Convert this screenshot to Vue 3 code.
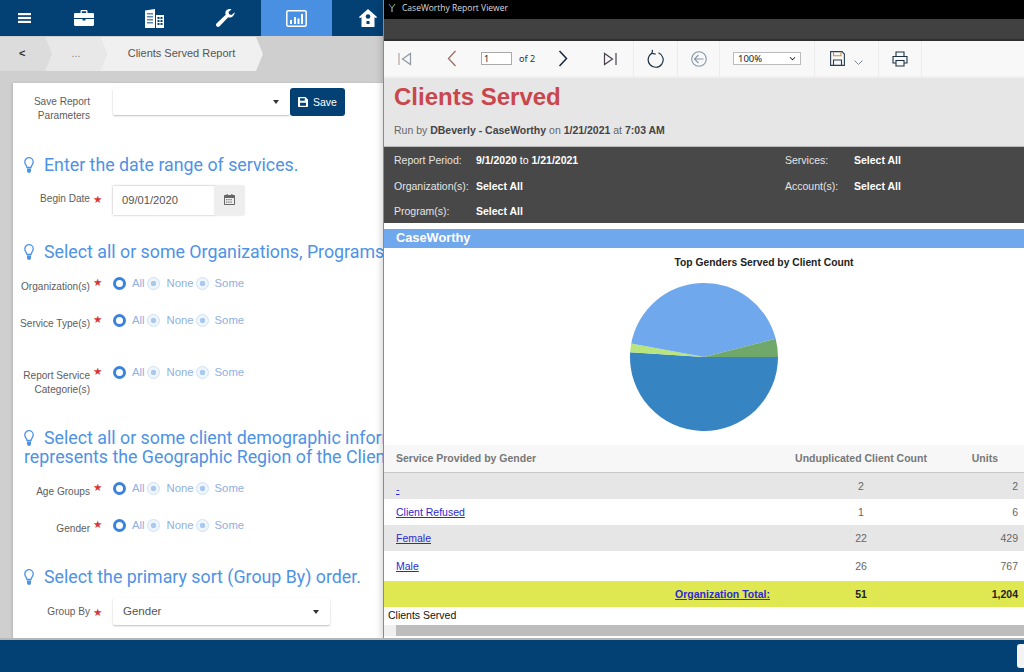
<template>
  <div class="app">
    <div class="main">
      <!-- left side: the parameter form -->
      <div class="left">
        <nav class="nav">
          <div class="nav-item burger">
            <svg width="13" height="10" viewBox="0 0 13 10" fill="#fff">
              <rect width="13" height="2.2" /><rect y="3.9" width="13" height="2.2" /><rect y="7.8" width="13" height="2.2" />
            </svg>
          </div>
          <div class="nav-item">
            <svg width="20" height="16" viewBox="0 0 20 16" fill="#fff">
              <path d="M6.5 3V1.2C6.5.5 7 0 7.7 0h4.6c.7 0 1.2.5 1.2 1.2V3h-1.3V1.3H7.8V3zM0 4.2C0 3.5.5 3 1.2 3h17.6c.7 0 1.2.5 1.2 1.2V8H0zM0 9h8.5v1.6h3V9H20v5.8c0 .7-.5 1.2-1.2 1.2H1.2C.5 16 0 15.5 0 14.8z" />
            </svg>
          </div>
          <div class="nav-item">
            <svg width="19" height="19" viewBox="0 0 19 19">
              <path fill="#fff" d="M0 1.5 10 0v19H0z" />
              <path fill="#fff" d="M11 6h8v13h-8z" />
              <g fill="#5c87ab">
                <rect x="2" y="4" width="6" height="1.5" /><rect x="2" y="7" width="6" height="1.5" /><rect x="2" y="10" width="6" height="1.5" /><rect x="2" y="13" width="6" height="1.5" />
              </g>
              <g fill="#034073">
                <rect x="12.5" y="8" width="2" height="2" /><rect x="15.5" y="8" width="2" height="2" /><rect x="12.5" y="11" width="2" height="2" /><rect x="15.5" y="11" width="2" height="2" /><rect x="12.5" y="14" width="2" height="2" /><rect x="15.5" y="14" width="2" height="2" />
              </g>
            </svg>
          </div>
          <div class="nav-item">
            <svg width="19" height="18" viewBox="0 0 19 18">
              <path fill="#fff" d="M18.7 3.2 15.6 6l-2.5-.7-.6-2.4L15.5.3C13.3-.5 10.8.2 9.8 2.3c-.6 1.2-.6 2.4-.1 3.5L.7 14.3c-.9.9-.9 2.2-.1 3 .8.8 2.1.8 3-.1l8.6-8.9c1.2.4 2.5.3 3.7-.4 2-1.1 2.9-3.4 2.8-4.700z" />
            </svg>
          </div>
          <div class="nav-item active">
            <svg width="21" height="17" viewBox="0 0 21 17">
              <rect x=".8" y=".8" width="19.4" height="15.4" rx="1.5" fill="none" stroke="#fff" stroke-width="1.5" />
              <g fill="#fff">
                <rect x="4" y="10" width="2" height="4" /><rect x="8" y="7" width="2" height="7" /><rect x="11.5" y="8.5" width="2" height="5.5" /><rect x="15" y="4" width="2" height="10" />
              </g>
            </svg>
          </div>
          <div class="nav-item">
            <svg width="18" height="18" viewBox="0 0 18 18">
              <path fill="#fff" d="M9 0 18 8l-1 1.2-1.5-1.2v10h-13V8L1 9.2 0 8z" />
              <circle cx="9" cy="7.5" r="2.3" fill="#034073" />
              <rect x="7.5" y="12" width="3" height="3" fill="#034073" />
            </svg>
          </div>
        </nav>

        <div class="crumbs">
          <div class="crumb back">&lt;</div>
          <div class="crumb dots">...</div>
          <div class="crumb current">Clients Served Report</div>
        </div>

        <form class="card">
          <div class="form-row save-row">
            <label class="field-label two-line">Save Report<br />Parameters</label>
            <span class="star-gap"></span>
            <div class="select save-select"><span class="caret"></span></div>
            <button class="save-btn" type="button">
              <svg width="10" height="10" viewBox="0 0 10 10">
                <path fill="#fff" d="M1 0h6.5L10 2.5V9c0 .6-.4 1-1 1H1c-.6 0-1-.4-1-1V1c0-.6.4-1 1-1zm1 1.2v2.6h4.8V1.2zM2 5.8v3h6v-3z" />
              </svg>
              Save
            </button>
          </div>

          <h2 class="hint first">
            <svg class="bulb" width="10" height="16" viewBox="0 0 10 16">
              <path fill="none" stroke="#4e92e6" stroke-width="1.3" d="M3 10.5C3 8.5.8 7.5.8 4.9A4.2 4.2 0 0 1 9.2 4.9C9.2 7.5 7 8.5 7 10.5z" />
              <path fill="#4e92e6" d="M3 11.5h4V14c0 1-1 2-2 2s-2-1-2-2z" />
            </svg>Enter the date range of services.
          </h2>
          <div class="form-row date-row">
            <label class="field-label">Begin Date</label>
            <span class="star">★</span>
            <div class="date-input">09/01/2020</div>
            <div class="date-addon">
              <svg width="11" height="11" viewBox="0 0 11 11">
                <path fill="#666" d="M1 1h1.5V0h1.2v1h3.6V0h1.2v1H10c.6 0 1 .4 1 1v8c0 .6-.4 1-1 1H1c-.6 0-1-.4-1-1V2c0-.6.4-1 1-1zm0 3v6h9V4z" />
                <path fill="#888" d="M2 5h1.5v1.2H2zM4.2 5h1.5v1.2H4.2zM6.4 5h1.5v1.2H6.4zM2 7.5h1.5v1.2H2zM4.2 7.5h1.5v1.2H4.2zM6.4 7.5h1.5v1.2H6.4z" />
              </svg>
            </div>
          </div>

          <h2 class="hint second">
            <svg class="bulb" width="10" height="16" viewBox="0 0 10 16">
              <path fill="none" stroke="#4e92e6" stroke-width="1.3" d="M3 10.5C3 8.5.8 7.5.8 4.9A4.2 4.2 0 0 1 9.2 4.9C9.2 7.5 7 8.5 7 10.5z" />
              <path fill="#4e92e6" d="M3 11.5h4V14c0 1-1 2-2 2s-2-1-2-2z" />
            </svg>Select all or some Organizations, Programs
          </h2>
          <div v-for="row in orgRows" :key="row.key" class="form-row radio-row" :class="row.cls">
            <label class="field-label two-line" v-html="row.label"></label>
            <span class="star">★</span>
            <div class="radios">
              <span class="radio on"></span><span class="radio-text all">All</span>
              <span class="radio"></span><span class="radio-text none">None</span>
              <span class="radio"></span><span class="radio-text">Some</span>
            </div>
          </div>

          <h2 class="hint third">
            <svg class="bulb" width="10" height="16" viewBox="0 0 10 16">
              <path fill="none" stroke="#4e92e6" stroke-width="1.3" d="M3 10.5C3 8.5.8 7.5.8 4.9A4.2 4.2 0 0 1 9.2 4.9C9.2 7.5 7 8.5 7 10.5z" />
              <path fill="#4e92e6" d="M3 11.5h4V14c0 1-1 2-2 2s-2-1-2-2z" />
            </svg>Select all or some client demographic information<br />represents the Geographic Region of the Client
          </h2>
          <div v-for="row in demoRows" :key="row.key" class="form-row radio-row" :class="row.cls">
            <label class="field-label two-line">{{ row.label }}</label>
            <span class="star">★</span>
            <div class="radios">
              <span class="radio on"></span><span class="radio-text all">All</span>
              <span class="radio"></span><span class="radio-text none">None</span>
              <span class="radio"></span><span class="radio-text">Some</span>
            </div>
          </div>

          <h2 class="hint fourth">
            <svg class="bulb" width="10" height="16" viewBox="0 0 10 16">
              <path fill="none" stroke="#4e92e6" stroke-width="1.3" d="M3 10.5C3 8.5.8 7.5.8 4.9A4.2 4.2 0 0 1 9.2 4.9C9.2 7.5 7 8.5 7 10.5z" />
              <path fill="#4e92e6" d="M3 11.5h4V14c0 1-1 2-2 2s-2-1-2-2z" />
            </svg>Select the primary sort (Group By) order.
          </h2>
          <div class="form-row group-row">
            <label class="field-label">Group By</label>
            <span class="star">★</span>
            <div class="select group-select">Gender<span class="caret"></span></div>
          </div>
        </form>
      </div>

      <!-- right side: the report viewer window -->
      <section class="viewer">
        <div class="title-bar">
          <svg width="8" height="8" viewBox="0 0 8 8" fill="none" stroke-width="1">
            <path d="M1 0 4 4" stroke="#4e92e6" /><path d="M7 0 4 4" stroke="#9bc24d" /><path d="M4 4v4" stroke="#ccc" />
          </svg>
          <span>CaseWorthy Report Viewer</span>
        </div>
        <div class="dark-strip"></div>

        <div class="toolbar">
          <div class="tool-group pager">
            <span class="tool first-btn">
              <svg width="14" height="14" viewBox="0 0 14 14" fill="none" stroke="#8e99a3" stroke-width="1.2">
                <path d="M1 1v12" stroke="#b9a79c" /><path d="M12.5 1.5v11L4.5 7z" />
              </svg>
            </span>
            <span class="tool prev-btn">
              <svg width="10" height="17" viewBox="0 0 10 17" fill="none" stroke="#9a6f66" stroke-width="1.3">
                <path d="M8.5 1 1.5 8.5l7 7.5" />
              </svg>
            </span>
            <input class="page-input" value="1" />
            <span class="page-of">of 2</span>
            <span class="tool next-btn">
              <svg width="10" height="17" viewBox="0 0 10 17" fill="none" stroke="#12263a" stroke-width="1.5">
                <path d="M1.5 1l7 7.5-7 7.5" />
              </svg>
            </span>
            <span class="tool last-btn">
              <svg width="14" height="14" viewBox="0 0 14 14" fill="none" stroke="#4a4050" stroke-width="1.2">
                <path d="M1.5 1.5v11L9.5 7z" /><path d="M13 1v12" />
              </svg>
            </span>
          </div>
          <div class="tool-group refresh">
            <svg width="17" height="19" viewBox="0 0 17 19" fill="none" stroke="#1d3345" stroke-width="1.2">
              <path d="M5 4.2a7.5 7.5 0 1 0 6.5-.4" /><path d="M5.5.8 5 4.4l3.6.8" />
            </svg>
          </div>
          <div class="tool-group back-tool">
            <svg width="16" height="16" viewBox="0 0 16 16" fill="none" stroke="#8496a8" stroke-width="1.1">
              <circle cx="8" cy="8" r="7.3" /><path d="M12.5 8H3.5M7.5 4 3.5 8l4 4" />
            </svg>
          </div>
          <div class="tool-group zoom-tool">
            <div class="zoom-select">100%<span class="zoom-caret"></span></div>
          </div>
          <div class="tool-group save-tool">
            <svg width="15" height="15" viewBox="0 0 15 15" fill="none" stroke="#2c3e50" stroke-width="1.1">
              <path d="M.6.6h11.4l2.4 2.4v11.4H.6z" /><path d="M3.5.8v4h7.5v-4" stroke="#c7913e" /><path d="M3.5 14v-5h8v5" />
            </svg>
            <svg class="chev" width="9" height="5" viewBox="0 0 9 5" fill="none" stroke="#7d8b9a" stroke-width="1">
              <path d="M.5.5l4 4 4-4" />
            </svg>
          </div>
          <div class="tool-group print-tool">
            <svg width="16" height="16" viewBox="0 0 16 16" fill="none" stroke="#1d3345" stroke-width="1.1">
              <path d="M4 5V1h8v4" /><path d="M4 12H1V5.5h14V12h-3" /><path d="M4 9.5h8V15H4z" />
            </svg>
          </div>
        </div>

        <header class="report-head">
          <h1>Clients Served</h1>
          <p>Run by <b>DBeverly - CaseWorthy</b> on <b>1/21/2021</b> at <b>7:03 AM</b></p>
        </header>

        <div class="params">
          <div class="param-col">
            <div class="param"><span class="param-name">Report Period:</span><span><b>9/1/2020</b> to <b>1/21/2021</b></span></div>
            <div class="param"><span class="param-name">Organization(s):</span><b>Select All</b></div>
            <div class="param"><span class="param-name">Program(s):</span><b>Select All</b></div>
          </div>
          <div class="param-col right-col">
            <div class="param"><span class="param-name">Services:</span><b>Select All</b></div>
            <div class="param"><span class="param-name">Account(s):</span><b>Select All</b></div>
          </div>
        </div>

        <div class="org-bar">CaseWorthy</div>

        <div class="chart">
          <div class="chart-title">Top Genders Served by Client Count</div>
          <svg class="pie" width="150" height="150" viewBox="0 0 150 150">
            <path fill="#3685c2" d="M75 75 149 75A74 74 0 1 1 1.15 70.35Z" />
            <path fill="#b9e57f" d="M75 75 1.15 70.35A74 74 0 0 1 2.2 61.6Z" />
            <path fill="#6fa8ec" d="M75 75 2.2 61.6A74 74 0 0 1 146.7 56.7Z" />
            <path fill="#70a86c" d="M75 75 146.7 56.7A74 74 0 0 1 149 75Z" />
          </svg>
        </div>

        <table class="report-table">
          <thead>
            <tr>
              <th class="name-col">Service Provided by Gender</th>
              <th class="count-col">Unduplicated Client Count</th>
              <th class="units-col">Units</th>
            </tr>
          </thead>
          <tbody>
            <tr v-for="row in tableRows" :key="row.name" :class="row.cls">
              <td class="name-col"><a href="#">{{ row.name }}</a></td>
              <td class="count-col">{{ row.count }}</td>
              <td class="units-col">{{ row.units }}</td>
            </tr>
            <tr class="total">
              <td class="name-col"><a href="#">Organization Total:</a></td>
              <td class="count-col">51</td>
              <td class="units-col">1,204</td>
            </tr>
          </tbody>
        </table>

        <div class="report-foot">Clients Served</div>
        <div class="scrollbar">
          <span class="scroll-arrow"></span>
          <div class="scroll-thumb"></div>
        </div>
      </section>
    </div>

    <footer class="footer"><span class="foot-tab"></span></footer>
  </div>
</template>

<script setup>
const orgRows = [
  { key: 'org', label: 'Organization(s)', cls: 'org' },
  { key: 'type', label: 'Service Type(s)', cls: 'type' },
  { key: 'cat', label: 'Report Service<br>Categorie(s)', cls: 'cat' }
]

const demoRows = [
  { key: 'age', label: 'Age Groups', cls: 'age' },
  { key: 'gender', label: 'Gender', cls: 'gender' }
]

const tableRows = [
  { name: '-', count: 2, units: 2, cls: 'grey r1' },
  { name: 'Client Refused', count: 1, units: 6, cls: 'r2' },
  { name: 'Female', count: 22, units: 429, cls: 'grey r3' },
  { name: 'Male', count: 26, units: 767, cls: 'r4' }
]
</script>

<style>
html,
body {
  margin: 0;
  background: #cfcfcf;
}
</style>

<style scoped>
.app {
  width: 1024px;
  height: 672px;
  display: flex;
  flex-direction: column;
  overflow: hidden;
  font-family: 'Liberation Sans', Arial, sans-serif;
}
.main {
  display: flex;
  height: 638px;
}
.left {
  width: 383px;
  overflow: hidden;
  background: #cfcfcf;
}
.nav {
  display: flex;
  width: 404px;
  height: 36px;
  background: #034073;
}
.nav-item {
  width: 71px;
  display: flex;
  align-items: center;
  justify-content: center;
}
.nav-item.burger {
  width: 48px;
}
.nav-item.active {
  background: #4a90e2;
}
.crumbs {
  display: flex;
  height: 34px;
  margin-top: 1px;
  font-size: 11px;
  color: #555;
}
.crumb {
  display: flex;
  align-items: center;
  justify-content: center;
  box-sizing: border-box;
  padding-bottom: 2px;
  clip-path: polygon(0 0, calc(100% - 7px) 0, 100% 50%, calc(100% - 7px) 100%, 0 100%, 7px 50%);
}
.back {
  width: 52px;
  background: #dcdcdc;
  clip-path: polygon(0 0, calc(100% - 7px) 0, 100% 50%, calc(100% - 7px) 100%, 0 100%);
  font-weight: bold;
  color: #333;
  justify-content: flex-start;
  padding-left: 19px;
}
.dots {
  width: 62px;
  margin-left: -7px;
  background: #e8e8e8;
  color: #888;
}
.current {
  width: 163px;
  margin-left: -7px;
  background: #f0f0f0;
}
.card {
  margin: 12px 0 0 13px;
  height: 555px;
  padding-top: 5px;
  box-sizing: border-box;
  background: #fff;
  box-shadow: -1px 0 2px rgba(0, 0, 0, 0.12);
}
.form-row {
  display: flex;
}
.field-label {
  width: 77px;
  flex: none;
  text-align: right;
  font-size: 10.1px;
  line-height: 14px;
  color: #5d5d5d;
}
.star-gap {
  width: 23px;
  flex: none;
}
.star {
  width: 20px;
  flex: none;
  padding-left: 3px;
  font-size: 10.5px;
  line-height: 14px;
  color: #d6393c;
  font-family: 'DejaVu Sans', sans-serif;
}
.select {
  position: relative;
  box-sizing: border-box;
  background: #fff;
  box-shadow: 0 1px 2px rgba(0, 0, 0, 0.25);
  border-radius: 2px;
  font-size: 11.5px;
  color: #555;
}
.caret {
  position: absolute;
  top: 50%;
  right: 11px;
  margin-top: -2px;
  border: 3.5px solid transparent;
  border-top: 4px solid #333;
  border-bottom: 0;
}
.save-row {
  height: 28px;
}
.save-row .field-label {
  padding-top: 7px;
}
.save-select {
  width: 177px;
  height: 27px;
}
.save-btn {
  width: 55px;
  height: 28px;
  padding: 0;
  border: 0;
  border-radius: 3px;
  background: #034073;
  color: #fff;
  font: 10.5px 'Liberation Sans', Arial, sans-serif;
  display: flex;
  align-items: center;
  justify-content: center;
  gap: 5px;
}
.hint {
  margin: 0 0 12px 11px;
  width: 500px;
  font: 400 17.8px/19px 'Roboto', 'Noto Sans', sans-serif;
  color: #4e92e6;
  white-space: nowrap;
}
.bulb {
  margin-right: 10px;
  vertical-align: -2px;
}
.hint.first {
  margin-top: 39px;
}
.hint.second {
  margin-top: 27px;
}
.hint.third {
  margin-top: 33px;
}
.hint.fourth {
  margin-top: 32px;
}
.date-row {
  height: 29px;
  align-items: center;
}
.date-row .field-label,
.date-row .star {
  margin-bottom: 3px;
}
.date-input {
  box-sizing: border-box;
  width: 102px;
  height: 29px;
  line-height: 29px;
  padding-left: 9px;
  font-size: 11.2px;
  color: #555;
  background: #fff;
  box-shadow: 0 0 2px rgba(0, 0, 0, 0.35);
}
.date-addon {
  width: 29px;
  height: 29px;
  background: #eee;
  box-shadow: 0 0 2px rgba(0, 0, 0, 0.2);
  display: flex;
  align-items: center;
  justify-content: center;
  padding-bottom: 3px;
  box-sizing: border-box;
}
.radio-row {
  height: 20px;
}
.radio-row .field-label {
  padding-top: 7px;
}
.radio-row .star {
  padding-top: 2px;
}
.radio-row.type {
  margin-top: 17px;
}
.radio-row.cat {
  margin-top: 32px;
  height: 33px;
}
.radio-row.gender {
  margin-top: 17px;
}
.radios {
  display: flex;
  align-items: center;
  height: 20px;
  font-size: 11.3px;
  color: #8fb0e0;
}
.radio {
  box-sizing: border-box;
  width: 13px;
  height: 13px;
  border-radius: 50%;
  border: 1px solid #cfe2f7;
  background: radial-gradient(circle, #a9c9ee 0 2.5px, #eef5fd 3px);
}
.radio.on {
  border: 3px solid #3a82de;
  background: #fff;
}
.radio-text {
  margin-left: 6px;
  margin-right: 3px;
}
.radio-text.all {
  margin-right: 2px;
}
.radio-text.none {
  margin-left: 7px;
  margin-right: 2px;
}
.group-row {
  align-items: center;
}
.group-select {
  width: 217px;
  height: 27px;
  line-height: 26px;
  padding-left: 10px;
}
.viewer {
  width: 641px;
  height: 638px;
  display: flex;
  flex-direction: column;
  box-sizing: border-box;
  border-left: 1px solid #8a8a8a;
  background: #fff;
  box-shadow: -3px 0 5px rgba(0, 0, 0, 0.12);
}
.title-bar {
  height: 19px;
  flex: none;
  background: #000;
  color: #ddd;
  display: flex;
  align-items: center;
  gap: 6px;
  padding-left: 4px;
  font: 8.5px 'Open Sans', sans-serif;
  padding-bottom: 4px;
  box-sizing: border-box;
}
.dark-strip {
  height: 22px;
  flex: none;
  background: #414141;
  border-bottom: 2px solid #2e2e2e;
  box-sizing: border-box;
}
.toolbar {
  height: 37px;
  flex: none;
  display: flex;
  background: #f8f8f8;
  border-bottom: 2px solid #f0f0f0;
  box-sizing: border-box;
}
.tool-group {
  display: flex;
  align-items: center;
  justify-content: center;
  box-sizing: border-box;
  border-right: 1px solid #ececec;
}
.pager {
  width: 250px;
  justify-content: flex-start;
}
.refresh {
  width: 44px;
}
.back-tool {
  width: 42px;
}
.zoom-tool {
  width: 95px;
}
.save-tool {
  width: 64px;
  gap: 9px;
}
.save-tool .chev {
  margin-top: 7px;
}
.print-tool {
  width: 43px;
}
.tool {
  display: flex;
  align-items: center;
  justify-content: center;
}
.first-btn,
.last-btn {
  width: 42px;
}
.prev-btn,
.next-btn {
  width: 52px;
}
.page-input {
  box-sizing: border-box;
  width: 31px;
  height: 13px;
  margin: 0 0 0 3px;
  padding: 0 0 0 2px;
  border: 1px solid #aaa;
  background: #fff;
  font: 9px 'Noto Sans', sans-serif;
  color: #222;
}
.page-of {
  width: 18px;
  margin-left: 7px;
  font: 9px 'Noto Sans', sans-serif;
  color: #333;
  white-space: nowrap;
}
.zoom-select {
  box-sizing: border-box;
  position: relative;
  width: 68px;
  height: 13px;
  padding-left: 4px;
  border: 1px solid #bbb;
  background: #fff;
  font: 9.5px/12px 'Noto Sans', sans-serif;
  color: #222;
}
.zoom-caret {
  position: absolute;
  right: 5px;
  top: 2px;
  width: 4px;
  height: 4px;
  border-right: 1.5px solid #111;
  border-bottom: 1.5px solid #111;
  transform: rotate(45deg) scale(0.8);
}
.report-head {
  height: 69px;
  flex: none;
  box-sizing: border-box;
  padding: 5px 0 0 10px;
  background: #e6e6e6;
  border-bottom: 1px solid #bbb;
}
.report-head h1 {
  margin: 0;
  font-size: 24px;
  line-height: 28px;
  font-weight: bold;
  color: #c9474c;
}
.report-head p {
  margin: 12px 0 0;
  font-size: 10.5px;
  line-height: 14px;
  color: #666;
}
.report-head b {
  color: #444;
}
.params {
  height: 76px;
  flex: none;
  box-sizing: border-box;
  display: flex;
  background: #484848;
  color: #fff;
  font-size: 10.5px;
  padding: 6px 0 0 10px;
}
.param-col {
  width: 391px;
  flex: none;
}
.right-col {
  width: 239px;
}
.param {
  display: flex;
  height: 25px;
  line-height: 14px;
}
.param:first-child {
  height: 26px;
}
.param-name {
  width: 82px;
  flex: none;
  color: #e4e4e4;
}
.right-col .param-name {
  width: 69px;
}
.org-bar {
  height: 19px;
  flex: none;
  margin-top: 6px;
  box-sizing: border-box;
  padding-left: 12px;
  background: #6fa8ec;
  color: #fff;
  font-size: 12.8px;
  font-weight: bold;
  line-height: 18px;
}
.chart {
  height: 197px;
  flex: none;
  box-sizing: border-box;
  padding-top: 8px;
}
.chart-title {
  padding-left: 120px;
  text-align: center;
  font-size: 10.3px;
  line-height: 14px;
  font-weight: bold;
  color: #222;
}
.pie {
  display: block;
  margin: 12px auto 0;
}
.report-table {
  width: 640px;
  flex: none;
  border-collapse: collapse;
  table-layout: fixed;
  font-size: 10.5px;
  color: #666;
}
.report-table th,
.report-table td {
  box-sizing: border-box;
  padding: 0;
}
.report-table th {
  height: 27px;
  background: #f7f7f7;
  border-bottom: 1px solid #c8c8c8;
  color: #777;
  font-weight: bold;
}
.report-table .name-col {
  text-align: left;
  padding-left: 12px;
}
.report-table .count-col {
  width: 168px;
  text-align: center;
}
.report-table .units-col {
  width: 79px;
  text-align: right;
  padding-right: 6px;
}
.report-table th.units-col {
  padding-right: 26px;
}
.report-table a {
  color: #2a2ad0;
}
.report-table .grey td {
  background: #e6e6e6;
}
.r1 td {
  height: 27px;
}
.report-table .r1 .name-col {
  padding-top: 6px;
}
.r2 td,
.r3 td {
  height: 26px;
}
.r4 td {
  height: 30px;
}
.total td {
  height: 26px;
  background: #e0e851;
  font-weight: bold;
  color: #222;
}
.report-table .total .name-col {
  text-align: right;
  padding-right: 7px;
}
.report-foot {
  height: 18px;
  flex: none;
  padding-left: 4px;
  box-sizing: border-box;
  font-size: 10.5px;
  line-height: 17px;
  color: #111;
  background: #fff;
}
.scrollbar {
  height: 11px;
  flex: none;
  display: flex;
  background: #f0f0f0;
}
.scroll-arrow {
  width: 12px;
}
.scroll-thumb {
  flex: 1;
  background: #bdbdbd;
}
.footer {
  flex: 1;
  position: relative;
  background: #034073;
  border-top: 2px solid #b5b5b5;
  box-sizing: border-box;
}
.foot-tab {
  position: absolute;
  right: 0;
  top: 4px;
  width: 7px;
  height: 24px;
  background: #f4f4f4;
  border-radius: 3px 0 0 3px;
}
</style>
